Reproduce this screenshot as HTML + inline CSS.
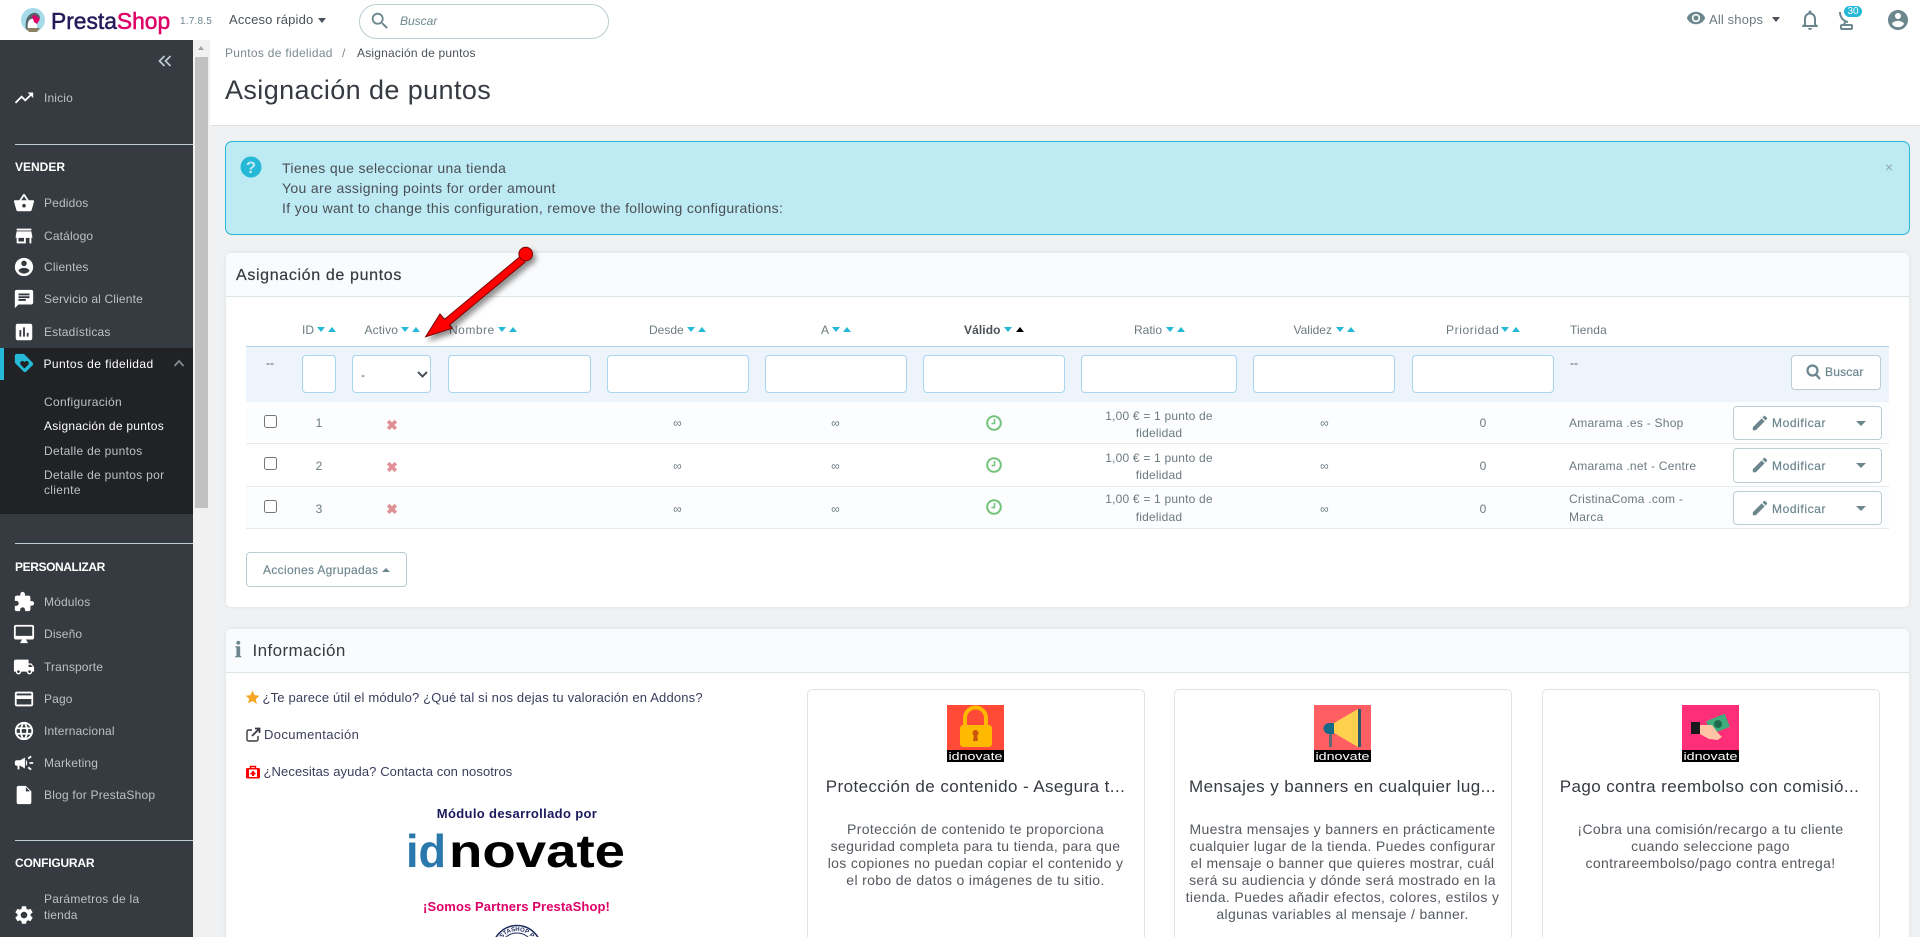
<!DOCTYPE html>
<html lang="es"><head><meta charset="utf-8"><title>Asignación de puntos</title>
<style>
html,body{margin:0;padding:0;width:1920px;height:937px;overflow:hidden;background:#eff1f2;font-family:"Liberation Sans",sans-serif;font-size:12px;color:#6c7a80}
#w{position:absolute;left:0;top:0;width:1920px;height:937px;overflow:hidden;background:#eff1f2}
.a{position:absolute;white-space:nowrap}
.t{position:absolute;white-space:nowrap;height:20px;line-height:20px}
.c{transform:translateX(-50%);text-align:center}
.s{position:absolute;fill:#fff}
.m{color:#bcc1c4;left:44px;letter-spacing:.15px}
.h{color:#fff;left:15px;font-weight:bold}
.sb{color:#bcc1c4;left:44px;letter-spacing:.3px}
.ln{position:absolute;left:15px;width:178px;height:1px;background:#bbcdd2}
.th{color:#6c7a80;top:319.5px}
.dn,.up{position:absolute;top:327px;width:0;height:0;border-left:4.5px solid transparent;border-right:4.5px solid transparent}
.dn{border-top:5px solid #25b9d7}.up{border-bottom:5px solid #25b9d7}
.in{position:absolute;top:355px;height:36px;background:#fff;border:1px solid #a9d5ee;border-radius:4px}
.row{position:absolute;left:246px;width:1643px;border-bottom:1px solid #e6eaec}
.cb{position:absolute;left:264px;width:11px;height:11px;border:1px solid #767676;border-radius:2.5px;background:#fff}
.x{color:#e08f95;font-weight:bold;font-size:14px;left:392px}
.v{font-size:12px;color:#6c7a80;letter-spacing:.2px}
.btn{position:absolute;left:1733px;width:147px;height:32px;background:#fff;border:1px solid #bbcdd2;border-radius:4px}
.mod{left:1772px;color:#6c868e;letter-spacing:.6px;-webkit-text-stroke:.2px #6c868e}
.car{position:absolute;left:1856px;width:0;height:0;border-left:5px solid transparent;border-right:5px solid transparent;border-top:5px solid #6c868e}
.panel{position:absolute;left:226px;width:1683px;background:#fff;border-radius:5px;box-shadow:0 0 4px rgba(0,0,0,.08)}
.phead{position:absolute;left:0;top:0;width:100%;background:#fafbfc;border-bottom:1px solid #dbe6e9;border-radius:5px 5px 0 0}
.card{position:absolute;top:689px;width:338px;height:260px;background:#fff;border:1px solid #dfe3e5;border-radius:5px;box-sizing:border-box}
.ct{font-size:17px;color:#363a41;letter-spacing:.42px;top:777px}
.cd{font-size:14px;color:#555a60;letter-spacing:.35px}
.il{font-size:13px;color:#3a3d5c}
.al{left:282px;font-size:14px;color:#4a4f55;letter-spacing:.35px}
</style></head><body><div id="w">

<!-- header -->
<div class="a" style="left:0;top:0;width:1920px;height:40px;background:#fff"></div>
<svg class="a" style="left:21px;top:8px;width:24px;height:24px" viewBox="0 0 24 24"><circle cx="12" cy="12" r="12" fill="#a5dbe8"/><path d="M5 21c-1-6 0-14 7-16 4-1 7 2 7 5l-3 2v9c-3 3-8 3-11 0z" fill="#59636b"/><path d="M7 21c-1-4 0-9 3-10 3-1 6 1 6 3v7c-3 2-6 2-9 0z" fill="#fff"/><path d="M11 8l3-1 5 4-3 5-3-2z" fill="#df0067"/><path d="M5 20h14l-3 4H8z" fill="#8d8064"/></svg>
<div class="t" style="left:51px;top:9px;font-size:22.8px;-webkit-text-stroke:.5px;height:24px;line-height:24px"><span style="color:#251b5b">Presta</span><span style="color:#df0067">Shop</span></div>
<div class="t" style="left:180px;top:12px;font-size:10px;color:#6c868e;letter-spacing:.2px">1.7.8.5</div>
<div class="t" style="left:229px;top:10px;font-size:13px;color:#4b5158;letter-spacing:.15px">Acceso rápido</div>
<div class="a" style="left:318px;top:18px;border-left:4.5px solid transparent;border-right:4.5px solid transparent;border-top:5px solid #4b5158"></div>
<div class="a" style="left:359px;top:4px;width:248px;height:33px;border:1px solid #bbcdd2;border-radius:18px;background:#fff"></div>
<svg class="a" style="left:369px;top:9px;width:22px;height:24px" viewBox="0 0 24 24" fill="#6c868e"><path d="M15.5 14h-.79l-.28-.27C15.41 12.59 16 11.11 16 9.5 16 5.91 13.09 3 9.5 3S3 5.91 3 9.5 5.91 16 9.5 16c1.61 0 3.09-.59 4.23-1.57l.27.28v.79l5 4.99L20.49 19l-4.99-5zm-6 0C7.01 14 5 11.99 5 9.5S7.01 5 9.5 5 14 7.01 14 9.5 11.99 14 9.5 14z"/></svg>
<div class="t" style="left:400px;top:11px;font-style:italic;color:#6c868e">Buscar</div>

<svg class="a" style="left:1686px;top:7px;width:20px;height:22px" viewBox="0 0 24 24" fill="#6c868e"><path d="M12 4.5C7 4.5 2.73 7.61 1 12c1.73 4.39 6 7.5 11 7.5s9.27-3.11 11-7.5c-1.73-4.39-6-7.5-11-7.5zM12 17c-2.76 0-5-2.24-5-5s2.24-5 5-5 5 2.24 5 5-2.24 5-5 5zm0-8c-1.66 0-3 1.34-3 3s1.34 3 3 3 3-1.34 3-3-1.34-3-3-3z"/></svg>
<div class="t" style="left:1709px;top:10px;font-size:13px;color:#6c7a80;letter-spacing:.15px">All shops</div>
<div class="a" style="left:1772px;top:17px;border-left:4.5px solid transparent;border-right:4.5px solid transparent;border-top:5px solid #4b5158"></div>
<svg class="a" style="left:1798px;top:8px;width:24px;height:24px" viewBox="0 0 24 24" fill="#6c868e"><path d="M12 22c1.1 0 2-.9 2-2h-4c0 1.1.9 2 2 2zm6-6v-5c0-3.07-1.63-5.64-4.5-6.32V4c0-.83-.67-1.5-1.5-1.5s-1.5.67-1.5 1.5v.68C7.64 5.36 6 7.92 6 11v5l-2 2v1h16v-1l-2-2zm-2 1H8v-6c0-2.48 1.51-4.5 4-4.5s4 2.02 4 4.5v6z"/></svg>
<svg class="a" style="left:1838px;top:10px;width:18px;height:20px" viewBox="0 0 18 20" fill="none" stroke="#6c868e" stroke-width="2"><path d="M2 2c0 5 3 9 8 10"/><path d="M7 12l-1 3"/><rect x="3" y="15" width="11" height="4" rx="1"/></svg>
<div class="a" style="left:1844px;top:6px;width:18px;height:11px;background:#25b9d7;border-radius:6px;color:#fff;font-size:10px;line-height:11px;text-align:center">30</div>
<svg class="a" style="left:1886px;top:8px;width:24px;height:24px" viewBox="0 0 24 24" fill="#6c868e"><path d="M12 2C6.48 2 2 6.48 2 12s4.48 10 10 10 10-4.48 10-10S17.52 2 12 2zm0 3c1.66 0 3 1.34 3 3s-1.34 3-3 3-3-1.34-3-3 1.34-3 3-3zm0 14.2c-2.5 0-4.71-1.28-6-3.22.03-1.99 4-3.08 6-3.08 1.99 0 5.97 1.09 6 3.08-1.29 1.94-3.5 3.22-6 3.22z"/></svg>

<!-- sidebar -->
<div class="a" style="left:0;top:40px;width:193px;height:897px;background:#363a41"></div>
<div class="a" style="left:193px;top:40px;width:17px;height:897px;background:#f1f1f1"></div>
<div class="a" style="left:195px;top:57px;width:13px;height:451px;background:#c1c1c1"></div>
<div class="a" style="left:198px;top:46px;border-left:3.5px solid transparent;border-right:3.5px solid transparent;border-bottom:4px solid #a3a3a3"></div>
<div class="a" style="left:0;top:348px;width:193px;height:166px;background:#202226"></div>
<div class="a" style="left:0;top:348px;width:4px;height:32px;background:#25b9d7"></div>
<svg class="a" style="left:158px;top:54px;width:14px;height:14px" viewBox="0 0 14 14" fill="none" stroke="#bbcdd2" stroke-width="1.7"><path d="M6.5 2L1.5 7l5 5M12.5 2l-5 5 5 5"/></svg>

<svg class="s" style="left:13px;top:87px;width:22px;height:22px" viewBox="0 0 24 24"><path d="M16 6l2.29 2.29-4.88 4.88-4-4L2 16.59 3.41 18l6-6 4 4 6.3-6.29L22 12V6z"/></svg>
<div class="t m" style="top:88px">Inicio</div>
<div class="ln" style="top:144px"></div>
<div class="t h" style="top:157px">VENDER</div>

<svg class="s" style="left:13px;top:192px;width:22px;height:22px" viewBox="0 0 24 24"><path d="M17.21 9l-4.38-6.56c-.19-.28-.51-.42-.83-.42-.32 0-.64.14-.83.43L6.79 9H2c-.55 0-1 .45-1 1 0 .09.01.18.04.27l2.54 9.27c.23.84 1 1.46 1.92 1.46h13c.92 0 1.69-.62 1.93-1.46l2.54-9.27L23 10c0-.55-.45-1-1-1h-4.79zM9 9l3-4.4L15 9H9zm3 8c-1.1 0-2-.9-2-2s.9-2 2-2 2 .9 2 2-.9 2-2 2z"/></svg>
<div class="t m" style="top:193px">Pedidos</div>
<svg class="s" style="left:13px;top:225px;width:22px;height:22px" viewBox="0 0 24 24"><path d="M20 4H4v2h16V4zm1 10v-2l-1-5H4l-1 5v2h1v6h10v-6h4v6h2v-6h1zm-9 4H6v-4h6v4z"/></svg>
<div class="t m" style="top:226px">Catálogo</div>
<svg class="s" style="left:13px;top:256px;width:22px;height:22px" viewBox="0 0 24 24"><path d="M12 2C6.48 2 2 6.48 2 12s4.48 10 10 10 10-4.48 10-10S17.52 2 12 2zm0 3c1.66 0 3 1.34 3 3s-1.34 3-3 3-3-1.34-3-3 1.34-3 3-3zm0 14.2c-2.5 0-4.71-1.28-6-3.22.03-1.99 4-3.08 6-3.08 1.99 0 5.97 1.09 6 3.08-1.29 1.94-3.5 3.22-6 3.22z"/></svg>
<div class="t m" style="top:257px">Clientes</div>
<svg class="s" style="left:13px;top:288px;width:22px;height:22px" viewBox="0 0 24 24"><path d="M20 2H4c-1.1 0-1.99.9-1.99 2L2 22l4-4h14c1.1 0 2-.9 2-2V4c0-1.1-.9-2-2-2zM6 9h12v2H6V9zm8 5H6v-2h8v2zm4-6H6V6h12v2z"/></svg>
<div class="t m" style="top:289px">Servicio al Cliente</div>
<svg class="s" style="left:13px;top:321px;width:22px;height:22px" viewBox="0 0 24 24"><path d="M19 3H5c-1.1 0-2 .9-2 2v14c0 1.1.9 2 2 2h14c1.1 0 2-.9 2-2V5c0-1.1-.9-2-2-2zM9 17H7v-7h2v7zm4 0h-2V7h2v10zm4 0h-2v-4h2v4z"/></svg>
<div class="t m" style="top:322px">Estadísticas</div>

<svg class="a" style="left:13px;top:352px;width:22px;height:22px" viewBox="0 0 24 24"><path fill="#25b9d7" d="M21.41 11.58l-9-9C12.05 2.22 11.55 2 11 2H4c-1.1 0-2 .9-2 2v7c0 .55.22 1.05.59 1.42l9 9c.36.36.86.58 1.41.58.55 0 1.05-.22 1.41-.59l7-7c.37-.36.59-.86.59-1.41 0-.55-.23-1.06-.59-1.42z"/><path fill="#202226" d="M12.5 18l-4-4c-1-1-1-2.6 0-3.5 1-1 2.6-1 3.5 0l.5.5.5-.5c1-1 2.6-1 3.5 0 1 1 1 2.5 0 3.5z"/></svg>
<div class="t" style="left:43.5px;top:354px;color:#fff;letter-spacing:.42px">Puntos de fidelidad</div>
<svg class="a" style="left:173px;top:358px;width:12px;height:10px" viewBox="0 0 12 10" fill="none" stroke="#7d8a90" stroke-width="1.8"><path d="M1.5 8L6 3l4.5 5"/></svg>
<div class="t sb" style="top:392px">Configuración</div>
<div class="t sb" style="top:416px;color:#fff;letter-spacing:.26px">Asignación de puntos</div>
<div class="t sb" style="top:441px">Detalle de puntos</div>
<div class="t sb" style="top:465px">Detalle de puntos por</div>
<div class="t sb" style="top:480px">cliente</div>

<div class="ln" style="top:543px"></div>
<div class="t h" style="top:557px;letter-spacing:-.4px">PERSONALIZAR</div>
<svg class="s" style="left:13px;top:591px;width:22px;height:22px" viewBox="0 0 24 24"><path d="M20.5 11H19V7c0-1.1-.9-2-2-2h-4V3.5C13 2.12 11.88 1 10.5 1S8 2.12 8 3.5V5H4c-1.1 0-1.99.9-1.99 2v3.8H3.5c1.49 0 2.7 1.21 2.7 2.7s-1.21 2.7-2.7 2.7H2V20c0 1.1.9 2 2 2h3.8v-1.5c0-1.49 1.21-2.7 2.7-2.7 1.49 0 2.7 1.21 2.7 2.7V22H17c1.1 0 2-.9 2-2v-4h1.5c1.38 0 2.5-1.12 2.5-2.5S21.88 11 20.5 11z"/></svg>
<div class="t m" style="top:592px">Módulos</div>
<svg class="s" style="left:13px;top:623px;width:22px;height:22px" viewBox="0 0 24 24"><path d="M21 2H3c-1.1 0-2 .9-2 2v12c0 1.1.9 2 2 2h7l-2 3v1h8v-1l-2-3h7c1.1 0 2-.9 2-2V4c0-1.1-.9-2-2-2zm0 12H3V4h18v10z"/></svg>
<div class="t m" style="top:624px">Diseño</div>
<svg class="s" style="left:13px;top:656px;width:22px;height:22px" viewBox="0 0 24 24"><path d="M20 8h-3V4H3c-1.1 0-2 .9-2 2v11h2c0 1.66 1.34 3 3 3s3-1.34 3-3h6c0 1.66 1.34 3 3 3s3-1.34 3-3h2v-5l-3-4zM6 18.5c-.83 0-1.5-.67-1.5-1.5s.67-1.5 1.5-1.5 1.5.67 1.5 1.5-.67 1.5-1.5 1.5zm13.5-9l1.96 2.5H17V9.5h2.5zm-1.5 9c-.83 0-1.5-.67-1.5-1.5s.67-1.5 1.5-1.5 1.5.67 1.5 1.5-.67 1.5-1.5 1.5z"/></svg>
<div class="t m" style="top:657px">Transporte</div>
<svg class="s" style="left:13px;top:688px;width:22px;height:22px" viewBox="0 0 24 24"><path d="M20 4H4c-1.11 0-1.99.89-1.99 2L2 18c0 1.11.89 2 2 2h16c1.11 0 2-.89 2-2V6c0-1.11-.89-2-2-2zm0 14H4v-6h16v6zm0-10H4V6h16v2z"/></svg>
<div class="t m" style="top:689px">Pago</div>
<svg class="s" style="left:13px;top:720px;width:22px;height:22px" viewBox="0 0 24 24"><path d="M11.99 2C6.47 2 2 6.48 2 12s4.47 10 9.99 10C17.52 22 22 17.52 22 12S17.52 2 11.99 2zm6.93 6h-2.95c-.32-1.25-.78-2.45-1.38-3.56 1.84.63 3.37 1.91 4.33 3.56zM12 4.04c.83 1.2 1.48 2.53 1.91 3.96h-3.82c.43-1.43 1.08-2.76 1.91-3.96zM4.26 14C4.1 13.36 4 12.69 4 12s.1-1.36.26-2h3.38c-.08.66-.14 1.32-.14 2 0 .68.06 1.34.14 2H4.26zm.82 2h2.95c.32 1.25.78 2.45 1.38 3.56-1.84-.63-3.37-1.9-4.33-3.56zm2.95-8H5.08c.96-1.66 2.49-2.93 4.33-3.56C8.81 5.55 8.35 6.75 8.03 8zM12 19.96c-.83-1.2-1.48-2.53-1.91-3.96h3.82c-.43 1.43-1.08 2.76-1.91 3.96zM14.34 14H9.66c-.09-.66-.16-1.32-.16-2 0-.68.07-1.35.16-2h4.68c.09.65.16 1.32.16 2 0 .68-.07 1.34-.16 2zm.25 5.56c.6-1.11 1.06-2.31 1.38-3.56h2.95c-.96 1.65-2.49 2.93-4.33 3.56zM16.36 14c.08-.66.14-1.32.14-2 0-.68-.06-1.34-.14-2h3.38c.16.64.26 1.31.26 2s-.1 1.36-.26 2h-3.38z"/></svg>
<div class="t m" style="top:721px">Internacional</div>
<svg class="s" style="left:13px;top:752px;width:22px;height:22px" viewBox="0 0 24 24"><path d="M18 11v2h4v-2h-4zm-2 6.61c.96.71 2.21 1.65 3.2 2.39.4-.53.8-1.07 1.2-1.6-.99-.74-2.24-1.68-3.2-2.4-.4.54-.8 1.08-1.2 1.61zM20.4 5.6c-.4-.53-.8-1.07-1.2-1.6-.99.74-2.24 1.68-3.2 2.4.4.53.8 1.07 1.2 1.6.96-.72 2.21-1.65 3.2-2.4zM4 9c-1.1 0-2 .9-2 2v2c0 1.1.9 2 2 2h1v4h2v-4h1l5 3V6L8 9H4zm11.5 3c0-1.33-.58-2.53-1.5-3.35v6.69c.92-.81 1.5-2.01 1.5-3.34z"/></svg>
<div class="t m" style="top:753px">Marketing</div>
<svg class="s" style="left:13px;top:784px;width:22px;height:22px" viewBox="0 0 24 24"><path d="M14 2H6c-1.1 0-1.99.9-1.99 2L4 20c0 1.1.89 2 1.99 2H18c1.1 0 2-.9 2-2V8l-6-6zm0 6V3.5L18.5 8H14z"/></svg>
<div class="t m" style="top:785px;letter-spacing:.2px">Blog for PrestaShop</div>
<div class="ln" style="top:840px"></div>
<div class="t h" style="top:853px;letter-spacing:-.2px">CONFIGURAR</div>
<div class="t m" style="top:889px;letter-spacing:.25px">Parámetros de la</div>
<div class="t m" style="top:905px">tienda</div>
<svg class="s" style="left:13px;top:904px;width:22px;height:22px" viewBox="0 0 24 24"><path d="M19.14 12.94c.04-.3.06-.61.06-.94 0-.32-.02-.64-.07-.94l2.03-1.58c.18-.14.23-.41.12-.61l-1.92-3.32c-.12-.22-.37-.29-.59-.22l-2.39.96c-.5-.38-1.03-.7-1.62-.94l-.36-2.54c-.04-.24-.24-.41-.48-.41h-3.84c-.24 0-.43.17-.47.41l-.36 2.54c-.59.24-1.13.57-1.62.94l-2.39-.96c-.22-.08-.47 0-.59.22L2.74 8.87c-.12.21-.08.47.12.61l2.03 1.58c-.05.3-.09.63-.09.94s.02.64.07.94l-2.03 1.58c-.18.14-.23.41-.12.61l1.92 3.32c.12.22.37.29.59.22l2.39-.96c.5.38 1.03.7 1.62.94l.36 2.54c.05.24.24.41.48.41h3.84c.24 0 .44-.17.47-.41l.36-2.54c.59-.24 1.13-.56 1.62-.94l2.39.96c.22.08.47 0 .59-.22l1.92-3.32c.12-.22.07-.47-.12-.61l-2.01-1.58zM12 15.6c-1.98 0-3.6-1.62-3.6-3.6s1.62-3.6 3.6-3.6 3.6 1.62 3.6 3.6-1.62 3.6-3.6 3.6z"/></svg>

<!-- page head -->
<div class="a" style="left:210px;top:40px;width:1710px;height:85px;background:#fff;border-bottom:1px solid #dfe1e2"></div>
<div class="t" style="left:225px;top:43px;color:#7a8a90;letter-spacing:.3px">Puntos de fidelidad</div>
<div class="t" style="left:342px;top:43px;color:#7a8a90">/</div>
<div class="t" style="left:357px;top:43px;color:#4b5158;letter-spacing:.2px">Asignación de puntos</div>
<div class="t" style="left:225px;top:70px;height:40px;line-height:40px;font-size:27px;color:#363a41;letter-spacing:.4px">Asignación de puntos</div>

<!-- alert -->
<div class="a" style="left:225px;top:141px;width:1683px;height:92px;background:#beeaf3;border:1px solid #25b9d7;border-radius:7px"></div>
<svg class="a" style="left:240px;top:156px;width:22px;height:22px" viewBox="0 0 22 22"><circle cx="11" cy="11" r="10.5" fill="#25b9d7"/><text x="11" y="17" font-family="Liberation Sans" font-size="17" font-weight="bold" fill="#beeaf3" text-anchor="middle">?</text></svg>
<div class="t al" style="top:158px">Tienes que seleccionar una tienda</div>
<div class="t al" style="top:178px">You are assigning points for order amount</div>
<div class="t al" style="top:198px">If you want to change this configuration, remove the following configurations:</div>
<div class="t c" style="left:1889px;top:157px;font-size:14px;color:#8fa9b1">×</div>

<!-- panel 1 -->
<div class="panel" style="top:253px;height:354px"><div class="phead" style="height:43px"></div></div>
<div class="t" style="left:236px;top:266px;font-size:16px;color:#363a41;letter-spacing:.65px;-webkit-text-stroke:.2px #363a41">Asignación de puntos</div>

<div class="t th" style="left:302px">ID</div><i class="dn" style="left:317px"></i><i class="up" style="left:328px"></i>
<div class="t th" style="left:364.5px;letter-spacing:.15px">Activo</div><i class="dn" style="left:400.5px"></i><i class="up" style="left:412px"></i>
<div class="t th" style="left:449px;letter-spacing:.5px">Nombre</div><i class="dn" style="left:497.5px"></i><i class="up" style="left:509px"></i>
<div class="t th" style="left:649px">Desde</div><i class="dn" style="left:687px"></i><i class="up" style="left:698px"></i>
<div class="t th" style="left:821px">A</div><i class="dn" style="left:831.5px"></i><i class="up" style="left:842.5px"></i>
<div class="t th" style="left:964px;font-weight:bold;color:#4b5158;letter-spacing:.1px">Válido</div><i class="dn" style="left:1004px"></i><i class="up" style="left:1015.5px;border-bottom-color:#000"></i>
<div class="t th" style="left:1134px">Ratio</div><i class="dn" style="left:1165.5px"></i><i class="up" style="left:1176.5px"></i>
<div class="t th" style="left:1293.5px">Validez</div><i class="dn" style="left:1336px"></i><i class="up" style="left:1347px"></i>
<div class="t th" style="left:1446px;letter-spacing:.6px">Prioridad</div><i class="dn" style="left:1500.5px"></i><i class="up" style="left:1511.5px"></i>
<div class="t th" style="left:1570px;letter-spacing:.1px">Tienda</div>

<!-- filter row -->
<div class="a" style="left:246px;top:346px;width:1643px;height:55px;background:#edf4fb;border-top:1px solid #a9d5ee;border-bottom:1px solid #a9d5ee"></div>
<div class="t" style="left:266px;top:353px;color:#4b5158">--</div>
<div class="in" style="left:302px;width:32px"></div>
<div class="in" style="left:352px;width:77px"></div>
<div class="t" style="left:361px;top:365px;color:#4b5158">-</div>
<svg class="a" style="left:417px;top:371px;width:11px;height:7px" viewBox="0 0 11 7" fill="none" stroke="#4b5158" stroke-width="2"><path d="M1 1l4.5 4.5L10 1"/></svg>
<div class="in" style="left:448px;width:141px"></div>
<div class="in" style="left:607px;width:140px"></div>
<div class="in" style="left:765px;width:140px"></div>
<div class="in" style="left:923px;width:140px"></div>
<div class="in" style="left:1081px;width:154px"></div>
<div class="in" style="left:1253px;width:140px"></div>
<div class="in" style="left:1412px;width:140px"></div>
<div class="t" style="left:1570px;top:353px;color:#4b5158">--</div>
<div class="a" style="left:1791px;top:355px;width:88px;height:33px;background:#fff;border:1px solid #bbcdd2;border-radius:4px"></div>
<svg class="a" style="left:1806px;top:364px;width:15px;height:16px" viewBox="0 0 15 16" fill="none" stroke="#6c868e" stroke-width="2.2"><circle cx="6.5" cy="6.5" r="5"/><path d="M10 10.5l4 4.5"/></svg>
<div class="t" style="left:1825px;top:362px;color:#6c868e;letter-spacing:.2px;-webkit-text-stroke:.2px #6c868e">Buscar</div>

<!-- rows -->
<div class="row" style="top:402px;height:41px;background:#fbfdfe"></div>
<div class="row" style="top:444px;height:42px;background:#fff"></div>
<div class="row" style="top:487px;height:41px;background:#fbfdfe"></div>

<div class="cb" style="top:415px"></div><div class="cb" style="top:457px"></div><div class="cb" style="top:500px"></div>
<div class="t c v" style="left:319px;top:413px">1</div><div class="t c v" style="left:319px;top:456px">2</div><div class="t c v" style="left:319px;top:499px">3</div>
<div class="t c x" style="top:415px">✖</div><div class="t c x" style="top:457px">✖</div><div class="t c x" style="top:499px">✖</div>

<div class="t c v" style="left:677.5px;top:413px">∞</div><div class="t c v" style="left:677.5px;top:456px">∞</div><div class="t c v" style="left:677.5px;top:499px">∞</div>
<div class="t c v" style="left:835.5px;top:413px">∞</div><div class="t c v" style="left:835.5px;top:456px">∞</div><div class="t c v" style="left:835.5px;top:499px">∞</div>

<svg class="a" style="left:986px;top:415px;width:16px;height:16px" viewBox="0 0 16 16" fill="none" stroke="#72c279" stroke-width="2"><circle cx="8" cy="8" r="6.8"/><path d="M8.5 4v4.5H5.5" stroke-width="1.5"/></svg>
<svg class="a" style="left:986px;top:457px;width:16px;height:16px" viewBox="0 0 16 16" fill="none" stroke="#72c279" stroke-width="2"><circle cx="8" cy="8" r="6.8"/><path d="M8.5 4v4.5H5.5" stroke-width="1.5"/></svg>
<svg class="a" style="left:986px;top:499px;width:16px;height:16px" viewBox="0 0 16 16" fill="none" stroke="#72c279" stroke-width="2"><circle cx="8" cy="8" r="6.8"/><path d="M8.5 4v4.5H5.5" stroke-width="1.5"/></svg>

<div class="t c v" style="left:1159px;top:406px">1,00 € = 1 punto de</div><div class="t c v" style="left:1159px;top:423px">fidelidad</div>
<div class="t c v" style="left:1159px;top:448px">1,00 € = 1 punto de</div><div class="t c v" style="left:1159px;top:465px">fidelidad</div>
<div class="t c v" style="left:1159px;top:489px">1,00 € = 1 punto de</div><div class="t c v" style="left:1159px;top:507px">fidelidad</div>

<div class="t c v" style="left:1324.5px;top:413px">∞</div><div class="t c v" style="left:1324.5px;top:456px">∞</div><div class="t c v" style="left:1324.5px;top:499px">∞</div>
<div class="t c v" style="left:1483px;top:413px">0</div><div class="t c v" style="left:1483px;top:456px">0</div><div class="t c v" style="left:1483px;top:499px">0</div>

<div class="t v" style="left:1569px;top:413px;letter-spacing:.25px">Amarama .es - Shop</div>
<div class="t v" style="left:1569px;top:456px;letter-spacing:.25px">Amarama .net - Centre</div>
<div class="t v" style="left:1569px;top:489px;letter-spacing:.25px">CristinaComa .com -</div>
<div class="t v" style="left:1569px;top:507px;letter-spacing:.25px">Marca</div>

<div class="btn" style="top:406px"></div><div class="btn" style="top:448px;height:33px"></div><div class="btn" style="top:491px"></div>
<svg class="a" style="left:1752px;top:415px;width:16px;height:16px" viewBox="2 2 20 20" fill="#6c868e"><path d="M3 17.25V21h3.75L17.81 9.94l-3.75-3.75L3 17.25zM20.71 7.04c.39-.39.39-1.02 0-1.41l-2.34-2.34c-.39-.39-1.02-.39-1.41 0l-1.83 1.83 3.75 3.75 1.83-1.83z"/></svg>
<svg class="a" style="left:1752px;top:457px;width:16px;height:16px" viewBox="2 2 20 20" fill="#6c868e"><path d="M3 17.25V21h3.75L17.81 9.94l-3.75-3.75L3 17.25zM20.71 7.04c.39-.39.39-1.02 0-1.41l-2.34-2.34c-.39-.39-1.02-.39-1.41 0l-1.83 1.83 3.75 3.75 1.83-1.83z"/></svg>
<svg class="a" style="left:1752px;top:500px;width:16px;height:16px" viewBox="2 2 20 20" fill="#6c868e"><path d="M3 17.25V21h3.75L17.81 9.94l-3.75-3.75L3 17.25zM20.71 7.04c.39-.39.39-1.02 0-1.41l-2.34-2.34c-.39-.39-1.02-.39-1.41 0l-1.83 1.83 3.75 3.75 1.83-1.83z"/></svg>
<div class="t mod" style="top:413px">Modificar</div><div class="t mod" style="top:456px">Modificar</div><div class="t mod" style="top:499px">Modificar</div>
<i class="car" style="top:421px"></i><i class="car" style="top:463px"></i><i class="car" style="top:506px"></i>

<div class="a" style="left:246px;top:552px;width:159px;height:33px;background:#fff;border:1px solid #bbcdd2;border-radius:4px"></div>
<div class="t" style="left:263px;top:560px;color:#6c868e;letter-spacing:.33px;-webkit-text-stroke:.15px #6c868e">Acciones Agrupadas</div>
<div class="a" style="left:382px;top:568px;border-left:4px solid transparent;border-right:4px solid transparent;border-bottom:4px solid #6c868e"></div>

<!-- info panel -->
<div class="panel" style="top:629px;height:320px"><div class="phead" style="height:43px"></div></div>
<div class="t" style="left:235px;top:640px;font-size:23px;font-weight:bold;font-family:'Liberation Serif',serif;color:#6c868e;-webkit-text-stroke:.5px #6c868e">i</div>
<div class="t" style="left:252.5px;top:641px;font-size:17px;color:#363a41;letter-spacing:.4px">Información</div>

<svg class="a" style="left:245px;top:690px;width:15px;height:15px" viewBox="0 0 24 24" fill="#f5a623"><path d="M12 1l3.4 7.2 7.6 1-5.6 5.300 1.400 7.800L12 17.600 5.200 21.300l1.400-7.800L1 9.200l7.600-1z"/></svg>
<div class="t il" style="left:262.5px;top:688px;letter-spacing:.17px">¿Te parece útil el módulo? ¿Qué tal si nos dejas tu valoración en Addons?</div>
<svg class="a" style="left:246px;top:727px;width:15px;height:15px" viewBox="0 0 15 15" fill="none" stroke="#363a41" stroke-width="1.4"><path d="M6 3H2.500C1.700 3 1 3.700 1 4.500v8C1 13.300 1.700 14 2.500 14h8c.8 0 1.500-.7 1.500-1.500V9"/><path d="M6 9l7-7M9 1.500h4.500V6" stroke-width="1.800"/></svg>
<div class="t il" style="left:264px;top:725px;letter-spacing:.38px">Documentación</div>
<svg class="a" style="left:246px;top:765px;width:14px;height:14px" viewBox="0 0 14 14"><rect x="0" y="3" width="14" height="10.500" rx="1.500" fill="#f00"/><path d="M4.500 3V1.500h5V3" fill="none" stroke="#f00" stroke-width="1.500"/><rect x="3" y="4.500" width="8" height="7.500" fill="#fff"/><path d="M6 6h2v1.500h1.500v2H8V11H6V9.500H4.500v-2H6z" fill="#f00"/></svg>
<div class="t il" style="left:263.5px;top:762px;letter-spacing:.1px">¿Necesitas ayuda? Contacta con nosotros</div>

<div class="t c" style="left:517px;top:804px;font-size:13px;font-weight:bold;color:#1c1a5b;letter-spacing:.35px">Módulo desarrollado por</div>
<svg class="a" style="left:407px;top:828px;width:220px;height:44px" viewBox="0 0 220 44"><text x="-1" y="39" font-family="Liberation Sans" font-weight="bold" font-size="46" fill="#2a78ac" textLength="40" lengthAdjust="spacingAndGlyphs">id</text><text x="42" y="39" font-family="Liberation Sans" font-weight="bold" font-size="46" fill="#000" textLength="176" lengthAdjust="spacingAndGlyphs">novate</text></svg>
<div class="t c" style="left:516.5px;top:897px;font-size:13px;font-weight:bold;color:#df0067;letter-spacing:.1px">¡Somos Partners PrestaShop!</div>
<svg class="a" style="left:490px;top:923px;width:54px;height:54px" viewBox="0 0 54 54"><circle cx="27" cy="27" r="24.500" fill="#fff" stroke="#1c2a5b" stroke-width="1.500"/><circle cx="27" cy="27" r="17" fill="none" stroke="#1c2a5b" stroke-width="1"/><path id="bp" d="M8 27A19 19 0 0 1 46 27" fill="none"/><text font-family="Liberation Sans" font-size="6" font-weight="bold" fill="#1c2a5b"><textPath href="#bp">PRESTASHOP PARTNER</textPath></text></svg>

<!-- cards -->
<div class="card" style="left:807px"></div>
<div class="card" style="left:1174px"></div>
<div class="card" style="left:1542px"></div>

<svg class="a" style="left:947px;top:705px;width:57px;height:57px" viewBox="0 0 57 57"><rect width="57" height="46" fill="#fe4a37"/><rect y="45" width="57" height="12" fill="#000"/><path d="M18 21v-8a10.500 10.500 0 0 1 21 0v8" fill="none" stroke="#ffb900" stroke-width="4"/><rect x="13" y="20" width="32" height="22" rx="3" fill="#ffb900"/><circle cx="28.500" cy="28" r="3" fill="#c9540d"/><path d="M27 29h3l1 7h-5z" fill="#c9540d"/><text x="28.500" y="55" font-family="Liberation Sans" font-size="11" fill="#fff" text-anchor="middle" textLength="54" lengthAdjust="spacingAndGlyphs">idnovate</text></svg>
<svg class="a" style="left:1314px;top:705px;width:57px;height:57px" viewBox="0 0 57 57"><rect width="57" height="46" fill="#ff5f63"/><rect y="45" width="57" height="12" fill="#000"/><path d="M20 18L44 4v38L20 28z" fill="#ffd04d"/><rect x="44" y="4" width="3" height="38" fill="#2a5a6b"/><rect x="15" y="28" width="3" height="14" fill="#5b6b73"/><path d="M20 18v11h-5a5.500 5.500 0 0 1 0-11z" fill="#156a8a"/><text x="28.500" y="55" font-family="Liberation Sans" font-size="11" fill="#fff" text-anchor="middle" textLength="54" lengthAdjust="spacingAndGlyphs">idnovate</text></svg>
<svg class="a" style="left:1682px;top:705px;width:57px;height:57px" viewBox="0 0 57 57"><rect width="57" height="46" fill="#ff2e78"/><rect y="45" width="57" height="12" fill="#000"/><g transform="rotate(-22 36 19)"><rect x="26" y="12" width="20" height="14" fill="#3fae7c"/><circle cx="36" cy="19" r="4" fill="#1f6d4d"/></g><path d="M18 20h12l6 8 4 4-3 2-1 1-9-1-9-5z" fill="#ffc5a5"/><rect x="9" y="17" width="9" height="12" fill="#1a1a1a"/><text x="28.500" y="55" font-family="Liberation Sans" font-size="11" fill="#fff" text-anchor="middle" textLength="54" lengthAdjust="spacingAndGlyphs">idnovate</text></svg>

<div class="t c ct" style="left:975.5px">Protección de contenido - Asegura t...</div>
<div class="t c ct" style="left:1342.5px">Mensajes y banners en cualquier lug...</div>
<div class="t c ct" style="left:1709.5px">Pago contra reembolso con comisió...</div>

<div class="t c cd" style="left:975.5px;top:819px">Protección de contenido te proporciona</div>
<div class="t c cd" style="left:975.5px;top:836px">seguridad completa para tu tienda, para que</div>
<div class="t c cd" style="left:975.5px;top:853px">los copiones no puedan copiar el contenido y</div>
<div class="t c cd" style="left:975.5px;top:870px">el robo de datos o imágenes de tu sitio.</div>

<div class="t c cd" style="left:1342.5px;top:819px">Muestra mensajes y banners en prácticamente</div>
<div class="t c cd" style="left:1342.5px;top:836px">cualquier lugar de la tienda. Puedes configurar</div>
<div class="t c cd" style="left:1342.5px;top:853px">el mensaje o banner que quieres mostrar, cuál</div>
<div class="t c cd" style="left:1342.5px;top:870px">será su audiencia y dónde será mostrado en la</div>
<div class="t c cd" style="left:1342.5px;top:887px">tienda. Puedes añadir efectos, colores, estilos y</div>
<div class="t c cd" style="left:1342.5px;top:904px">algunas variables al mensaje / banner.</div>

<div class="t c cd" style="left:1710.5px;top:819px">¡Cobra una comisión/recargo a tu cliente</div>
<div class="t c cd" style="left:1710.5px;top:836px">cuando seleccione pago</div>
<div class="t c cd" style="left:1710.5px;top:853px">contrareembolso/pago contra entrega!</div>

<!-- red arrow annotation -->
<svg class="a" style="left:410px;top:240px;width:130px;height:110px;overflow:visible;filter:drop-shadow(3px 4px 3px rgba(0,0,0,.45))" viewBox="410 240 130 110"><path d="M523 259l-77 64" stroke="#7a0000" stroke-width="8.500" fill="none"/><path d="M425.700 336.700L440 314l12 14.300z" fill="#f00" stroke="#7a0000" stroke-width="1"/><path d="M523 259l-77 64" stroke="#f00" stroke-width="6.500" fill="none"/><circle cx="525.700" cy="254" r="6.800" fill="#f00" stroke="#7a0000" stroke-width="1"/></svg>
</div></body></html>
